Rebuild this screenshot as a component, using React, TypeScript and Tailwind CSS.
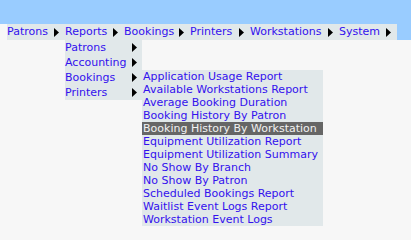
const topItems = [
  { label: 'Patrons', w: 'w-[58px]' },
  { label: 'Reports', w: 'w-[59px]' },
  { label: 'Bookings', w: 'w-[66px]' },
  { label: 'Printers', w: 'w-[60px]' },
  { label: 'Workstations', w: 'w-[89px]' },
  { label: 'System', w: 'w-[58px]' },
];
const reportItems = ['Patrons', 'Accounting', 'Bookings', 'Printers'];
const bookingReports = [
  'Application Usage Report',
  'Available Workstations Report',
  'Average Booking Duration',
  'Booking History By Patron',
  'Booking History By Workstation',
  'Equipment Utilization Report',
  'Equipment Utilization Summary',
  'No Show By Branch',
  'No Show By Patron',
  'Scheduled Bookings Report',
  'Waitlist Event Logs Report',
  'Workstation Event Logs',
];

function Arrow() {
  return (
    <svg width="5" height="9" viewBox="0 0 5 9" className="shrink-0">
      <path d="M0 0 L5 4.5 L0 9 Z" fill="#000" />
    </svg>
  );
}

function BookingsMenu() {
  return (
    <div className="absolute left-full top-0 w-[181px] bg-[#e1e8ea]">
      {bookingReports.map((r, i) => (
        <div
          key={r}
          className={
            i === 4
              ? 'h-[13px] leading-[13px] pl-[1px] whitespace-nowrap bg-[#666666] text-[#f2f2f2]'
              : 'h-[13px] leading-[13px] pl-[1px] whitespace-nowrap text-[#3311ee]'
          }
        >
          {r}
        </div>
      ))}
    </div>
  );
}

function ReportsMenu() {
  return (
    <div className="absolute left-0 top-full w-[77px] bg-[#e1e8ea]">
      {reportItems.map((r) => (
        <div key={r} className="relative flex items-center justify-between h-[15px] pr-[5px]">
          <span className="text-[#3311ee] leading-[15px]">{r}</span>
          <Arrow />
          {r === 'Bookings' && <BookingsMenu />}
        </div>
      ))}
    </div>
  );
}

export default function App() {
  return (
    <div className="w-[411px] h-[240px] bg-[#f7f7f7] text-[11px] font-['DejaVu_Sans',sans-serif]">
      <div className="h-[24px] bg-[#99ccff]" />
      <div className="flex h-[16px]">
        <div className="w-[7px]" />
        <div className="flex bg-[#e1e8ea]">
          {topItems.map((t) => (
            <div key={t.label} className={`relative flex items-center justify-between h-[16px] pr-[6px] ${t.w}`}>
              <span className="text-[#3311ee] leading-[16px]">{t.label}</span>
              <span className="pt-[1px]">
                <Arrow />
              </span>
              {t.label === 'Reports' && <ReportsMenu />}
            </div>
          ))}
        </div>
        <div className="flex-1 bg-[#99ccff]" />
      </div>
    </div>
  );
}
